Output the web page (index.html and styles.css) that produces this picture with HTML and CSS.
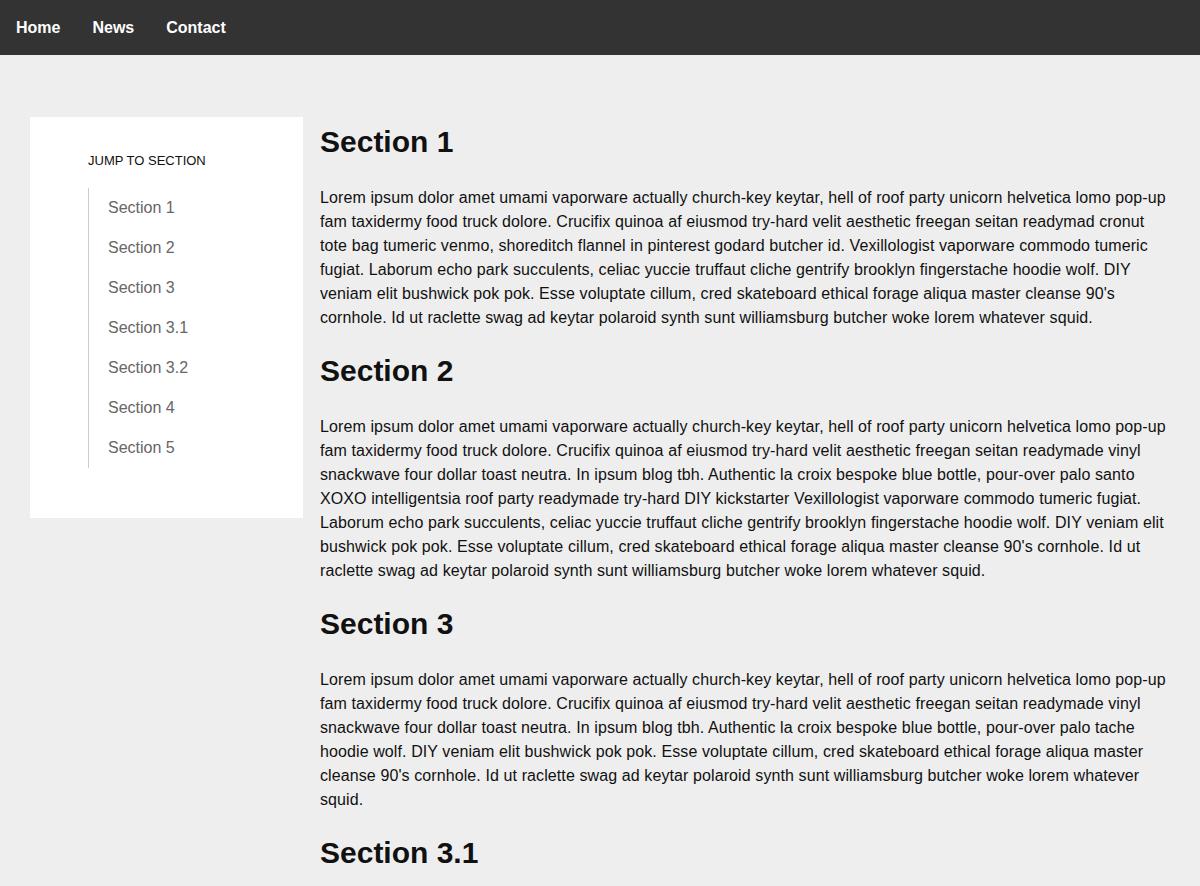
FILE: index.html
```html
<!DOCTYPE html>
<html lang="en">
<head>
<meta charset="utf-8">
<title>Jump to section</title>
<link rel="stylesheet" href="styles.css">
</head>
<body>
<nav class="topnav">
  <a class="topnav-link" href="#">Home</a>
  <a class="topnav-link" href="#">News</a>
  <a class="topnav-link" href="#">Contact</a>
</nav>
<div class="layout">
  <aside class="toc">
    <div class="toc-title">JUMP TO SECTION</div>
    <ul class="toc-list">
      <li class="toc-item"><a href="#s1">Section 1</a></li>
      <li class="toc-item"><a href="#s2">Section 2</a></li>
      <li class="toc-item"><a href="#s3">Section 3</a></li>
      <li class="toc-item"><a href="#s31">Section 3.1</a></li>
      <li class="toc-item"><a href="#s32">Section 3.2</a></li>
      <li class="toc-item"><a href="#s4">Section 4</a></li>
      <li class="toc-item"><a href="#s5">Section 5</a></li>
    </ul>
  </aside>
  <main class="content">
    <h2 id="s1" class="section-title">Section 1</h2>
    <p class="section-text">Lorem ipsum dolor amet umami vaporware actually church-key keytar, hell of roof party unicorn helvetica lomo pop-up fam taxidermy food truck dolore. Crucifix quinoa af eiusmod try-hard velit aesthetic freegan seitan readymad cronut tote bag tumeric venmo, shoreditch flannel in pinterest godard butcher id. Vexillologist vaporware commodo tumeric fugiat. Laborum echo park succulents, celiac yuccie truffaut cliche gentrify brooklyn fingerstache hoodie wolf. DIY veniam elit bushwick pok pok. Esse voluptate cillum, cred skateboard ethical forage aliqua master cleanse 90's cornhole. Id ut raclette swag ad keytar polaroid synth sunt williamsburg butcher woke lorem whatever squid.</p>
    <h2 id="s2" class="section-title">Section 2</h2>
    <p class="section-text">Lorem ipsum dolor amet umami vaporware actually church-key keytar, hell of roof party unicorn helvetica lomo pop-up fam taxidermy food truck dolore. Crucifix quinoa af eiusmod try-hard velit aesthetic freegan seitan readymade vinyl snackwave four dollar toast neutra. In ipsum blog tbh. Authentic la croix bespoke blue bottle, pour-over palo santo XOXO intelligentsia roof party readymade try-hard DIY kickstarter Vexillologist vaporware commodo tumeric fugiat. Laborum echo park succulents, celiac yuccie truffaut cliche gentrify brooklyn fingerstache hoodie wolf. DIY veniam elit bushwick pok pok. Esse voluptate cillum, cred skateboard ethical forage aliqua master cleanse 90's cornhole. Id ut raclette swag ad keytar polaroid synth sunt williamsburg butcher woke lorem whatever squid.</p>
    <h2 id="s3" class="section-title">Section 3</h2>
    <p class="section-text">Lorem ipsum dolor amet umami vaporware actually church-key keytar, hell of roof party unicorn helvetica lomo pop-up fam taxidermy food truck dolore. Crucifix quinoa af eiusmod try-hard velit aesthetic freegan seitan readymade vinyl snackwave four dollar toast neutra. In ipsum blog tbh. Authentic la croix bespoke blue bottle, pour-over palo tache hoodie wolf. DIY veniam elit bushwick pok pok. Esse voluptate cillum, cred skateboard ethical forage aliqua master cleanse 90's cornhole. Id ut raclette swag ad keytar polaroid synth sunt williamsburg butcher woke lorem whatever squid.</p>
    <h2 id="s31" class="section-title">Section 3.1</h2>
    <p class="section-text">Lorem ipsum dolor amet umami vaporware actually church-key keytar, hell of roof party unicorn helvetica lomo pop-up fam taxidermy food truck dolore.</p>
  </main>
</div>
</body>
</html>
```

FILE: styles.css
```css
* { box-sizing: border-box; }
html, body {
  margin: 0;
  padding: 0;
  background: #eeeeee;
  font-family: "Liberation Sans", Arial, sans-serif;
  color: #111111;
}
.topnav {
  display: flex;
  height: 55px;
  align-items: center;
  background: #333333;
}
.topnav-link {
  padding: 0 16px;
  color: #ffffff;
  font-weight: 700;
  font-size: 16px;
  text-decoration: none;
}
.layout {
  display: flex;
  align-items: flex-start;
  padding: 62px 30px 0 30px;
  gap: 17px;
}
.toc {
  flex: 0 0 273px;
  background: #ffffff;
  padding: 34px 20px 50px 58px;
}
.toc-title {
  font-size: 13px;
  line-height: 20px;
  color: #111111;
  margin-bottom: 17px;
}
.toc-list {
  list-style: none;
  margin: 0;
  padding: 0;
  border-left: 1px solid #cccccc;
}
.toc-item {
  height: 40px;
  line-height: 40px;
  padding-left: 19px;
  font-size: 16px;
}
.toc-item a {
  color: #666666;
  text-decoration: none;
}
.content {
  flex: 1;
  padding-top: 5px;
}
.section-title {
  margin: 0 0 24px 0;
  font-size: 30px;
  line-height: 40px;
  font-weight: 700;
}
.section-text {
  margin: 0 0 21px 0;
  font-size: 16px;
  line-height: 24px;
  letter-spacing: 0.1px;
}
```
